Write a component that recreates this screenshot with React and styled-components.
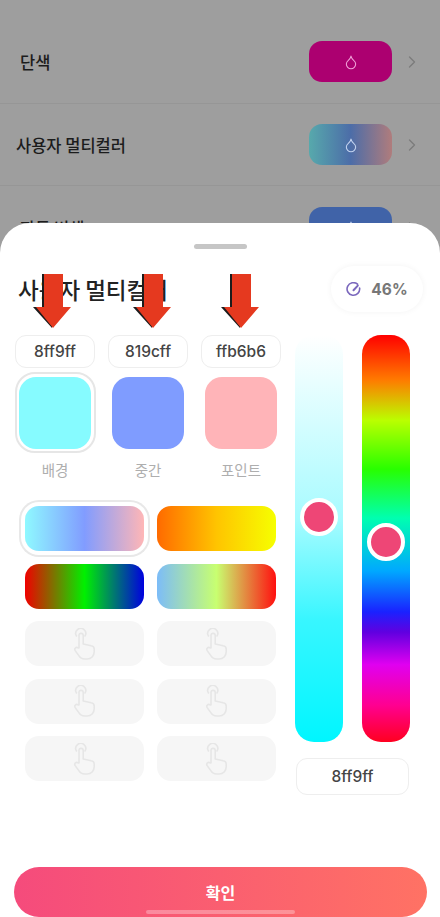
import React from "react";
import styled, { createGlobalStyle } from "styled-components";
import { ChevronRight, Droplet } from "lucide-react";

const GlobalStyle = createGlobalStyle`
  html, body {
    margin: 0;
    padding: 0;
    background: #9e9e9e;
  }
  * {
    box-sizing: border-box;
  }
`;

const Page = styled.div`
  width: 440px;
  height: 917px;
  overflow: hidden;
  background: #9e9e9e;
  font-family: "Noto Sans CJK KR", "Noto Sans", sans-serif;
`;

const Backdrop = styled.div`
  height: 223px;
  overflow: hidden;
`;

const Row = styled.div`
  display: flex;
  align-items: center;
  height: ${(props) => props.$height}px;
  padding: ${(props) => props.$top || 0}px 18px 0 ${(props) => props.$left}px;
  border-bottom: 1px solid #969696;
  color: #1c1c1c;
`;

const RowLabel = styled.span`
  font-size: 16.5px;
  font-weight: 500;
`;

const ColorChip = styled.div`
  display: flex;
  align-items: center;
  justify-content: center;
  width: 83px;
  height: 41px;
  margin-left: auto;
  margin-right: 10px;
  border-radius: 13px;
  background: ${(props) => props.$fill};
  color: ${(props) => props.$tint};
`;

const Sheet = styled.div`
  display: flex;
  flex-direction: column;
  height: 694px;
  border-radius: 30px 30px 0 0;
  background: #fff;
`;

const Grabber = styled.div`
  width: 53px;
  height: 5px;
  margin: 21px auto 0;
  border-radius: 3px;
  background: #c6c6c6;
`;

const Header = styled.div`
  display: flex;
  align-items: center;
  justify-content: space-between;
  height: 46px;
  margin-top: 17px;
  padding: 0 17px 0 18px;
`;

const Title = styled.h1`
  margin: 0;
  font-size: 22.5px;
  font-weight: 500;
  color: #222;
`;

const Pill = styled.div`
  display: flex;
  align-items: center;
  justify-content: center;
  gap: 10px;
  width: 92px;
  height: 46px;
  border-radius: 23px;
  background: #fff;
  box-shadow: 0 0 6px rgba(0, 0, 0, 0.05);
  color: #777;
  font-family: "Inter", sans-serif;
  font-size: 15.5px;
  font-weight: 700;
`;

const Body = styled.div`
  display: flex;
  margin-top: 23px;
`;

const LeftColumn = styled.div`
  width: 281px;
  padding-left: 15px;
`;

const SwatchGrid = styled.div`
  display: grid;
  grid-template-columns: repeat(3, 80px);
  column-gap: 13px;
  justify-items: center;
`;

const HexField = styled.div`
  position: relative;
  display: flex;
  align-items: center;
  justify-content: center;
  width: ${(props) => props.$width || 80}px;
  height: ${(props) => props.$height || 33}px;
  border: 1px solid #eee;
  border-radius: 11px;
  background: #fff;
  color: #444;
  font-family: "Inter", sans-serif;
  font-size: 15.5px;
  font-weight: 500;
`;

const ArrowMark = styled.svg`
  position: absolute;
  left: ${(props) => props.$left}px;
  top: -63px;
  width: 40px;
  height: 56px;
`;

const SwatchFrame = styled.div`
  display: flex;
  align-items: center;
  justify-content: center;
  width: 81px;
  height: 81px;
  margin-top: 4px;
  border: 2px solid ${(props) => (props.$selected ? "#e6e6e6" : "transparent")};
  border-radius: 20px;
`;

const Swatch = styled.div`
  width: 72px;
  height: 72px;
  border-radius: 17px;
  background: ${(props) => props.$fill};
`;

const SwatchLabel = styled.div`
  margin-top: 6px;
  color: #aeaeae;
  font-size: 14.5px;
  line-height: 22px;
`;

const PresetGrid = styled.div`
  display: grid;
  grid-template-columns: repeat(2, 119px);
  grid-auto-rows: 45px;
  gap: 12.5px 13px;
  margin: 25px 0 0 10px;
`;

const Preset = styled.div`
  display: flex;
  align-items: center;
  justify-content: center;
  border-radius: 14px;
  background: ${(props) => props.$fill || "#f6f6f6"};
  box-shadow: ${(props) =>
    props.$selected ? "0 0 0 4px #fff, 0 0 0 6px #e8e8e8" : "none"};
`;

const HandIcon = styled.svg`
  width: 24px;
  height: 32px;
  fill: none;
  stroke: #e6e6e6;
  stroke-width: 1.6;
  stroke-linecap: round;
  stroke-linejoin: round;
`;

const RightColumn = styled.div`
  display: flex;
  flex-direction: column;
  width: 115px;
  margin-left: 14px;
`;

const SliderPair = styled.div`
  display: flex;
  gap: 19px;
`;

const Slider = styled.div`
  position: relative;
  width: 48px;
  height: 407px;
  border-radius: 19px;
  background: ${(props) => props.$fill};
`;

const Thumb = styled.div`
  position: absolute;
  left: 5px;
  top: ${(props) => props.$top}px;
  width: 38px;
  height: 38px;
  border: 4px solid #fff;
  border-radius: 50%;
  background: #ee4676;
`;

const ValueSlot = styled.div`
  margin: 16px 0 0 1px;
`;

const Footer = styled.div`
  position: relative;
  display: flex;
  align-items: center;
  justify-content: center;
  height: 50px;
  margin: auto 13px 0 14px;
  border-radius: 25px;
  background: linear-gradient(90deg, #f54b7c, #ff7264);
  color: #fff;
  font-size: 16px;
  font-weight: 700;
`;

const HomeBar = styled.div`
  position: absolute;
  left: 132px;
  bottom: 3px;
  width: 149px;
  height: 4px;
  border-radius: 2px;
  background: rgba(255, 255, 255, 0.3);
`;

const hues =
  "linear-gradient(180deg, #ff0000 0%, #ff7a00 11%, #baff00 21%, #28ff00 33%, #00ffb0 45%, #00a8ff 58%, #1a22ff 68%, #6000e0 73%, #e000f0 81%, #ff0090 91%, #ff0020 100%)";

const swatches = [
  { hex: "8ff9ff", label: "배경", fill: "#86fbff", selected: true, arrow: 17 },
  { hex: "819cff", label: "중간", fill: "#7f9cff", arrow: 24 },
  { hex: "ffb6b6", label: "포인트", fill: "#ffb4b8", arrow: 19 },
];

const presets = [
  { fill: "linear-gradient(90deg, #8ff9ff, #819cff 50%, #ffb6b6)", selected: true },
  { fill: "linear-gradient(90deg, #ff6a00, #ffc400 50%, #f6ff00)" },
  { fill: "linear-gradient(90deg, #f00000, #00f000 50%, #0000e0)" },
  { fill: "linear-gradient(90deg, #7cbcf8, #c8ff70 50%, #ff1010)" },
  {},
  {},
  {},
  {},
  {},
  {},
];

function Arrow({ left }) {
  return (
    <ArrowMark $left={left} viewBox="0 0 40 56">
      <path fill="#1c1c1c" d="M9 1h8v33h3l-1 21L0 34h9z" />
      <path fill="#e5391f" d="M11 1h19v33h8L20 55 3 34h8z" />
    </ArrowMark>
  );
}

function Hand() {
  return (
    <HandIcon viewBox="0 0 24 32">
      <path d="M3.500 8a5 5 0 1 1 8.500 0" />
      <path d="M6 20V7.500a2.100 2.100 0 0 1 4.200 0V16l8 1.800a3.400 3.400 0 0 1 3 3.400V24a7 7 0 0 1-7 7h-2.400a7 7 0 0 1-6-3.400L2 22.400a2 2 0 0 1 3-2.500z" />
    </HandIcon>
  );
}

export default function App() {
  return (
    <Page>
      <GlobalStyle />
      <Backdrop>
        <Row $height={104} $top={20} $left={20}>
          <RowLabel>단색</RowLabel>
          <ColorChip $fill="#ac0070" $tint="#f0a0d8">
            <Droplet size={16} strokeWidth={1.6} />
          </ColorChip>
          <ChevronRight size={20} color="#7c7c7c" strokeWidth={1.6} />
        </Row>
        <Row $height={82} $left={16}>
          <RowLabel>사용자 멀티컬러</RowLabel>
          <ColorChip
            $fill="linear-gradient(90deg, #57a9ac, #4c6da8 50%, #b07c7c)"
            $tint="#c4d4f0"
          >
            <Droplet size={16} strokeWidth={1.6} />
          </ColorChip>
          <ChevronRight size={20} color="#7c7c7c" strokeWidth={1.6} />
        </Row>
        <Row $height={84} $left={20}>
          <RowLabel>자동 변색 1</RowLabel>
          <ColorChip $fill="#4063a8" $tint="#c4d4f0">
            <Droplet size={16} strokeWidth={1.6} />
          </ColorChip>
          <ChevronRight size={20} color="#7c7c7c" strokeWidth={1.6} />
        </Row>
      </Backdrop>
      <Sheet>
        <Grabber />
        <Header>
          <Title>사용자 멀티컬러</Title>
          <Pill>
            <svg width="15" height="15" viewBox="0 0 15 15" fill="none">
              <path
                d="M11.500 2.200A6.300 6.300 0 1 0 13.600 6"
                stroke="#7b68bd"
                strokeWidth="1.600"
                strokeLinecap="round"
              />
              <path
                d="M7.500 8.200 11.800 3.600"
                stroke="#7b68bd"
                strokeWidth="2"
                strokeLinecap="round"
              />
            </svg>
            46%
          </Pill>
        </Header>
        <Body>
          <LeftColumn>
            <SwatchGrid>
              {swatches.map((item) => (
                <HexField key={item.hex}>
                  <Arrow left={item.arrow} />
                  {item.hex}
                </HexField>
              ))}
              {swatches.map((item) => (
                <SwatchFrame key={item.hex} $selected={item.selected}>
                  <Swatch $fill={item.fill} />
                </SwatchFrame>
              ))}
              {swatches.map((item) => (
                <SwatchLabel key={item.hex}>{item.label}</SwatchLabel>
              ))}
            </SwatchGrid>
            <PresetGrid>
              {presets.map((item, index) => (
                <Preset key={index} $fill={item.fill} $selected={item.selected}>
                  {!item.fill && <Hand />}
                </Preset>
              ))}
            </PresetGrid>
          </LeftColumn>
          <RightColumn>
            <SliderPair>
              <Slider $fill="linear-gradient(180deg, #fff 0%, #a8fbff 45%, #38f6ff 70%, #00f6ff 100%)">
                <Thumb $top={163} />
              </Slider>
              <Slider $fill={hues}>
                <Thumb $top={188} />
              </Slider>
            </SliderPair>
            <ValueSlot>
              <HexField $width={113} $height={37}>
                8ff9ff
              </HexField>
            </ValueSlot>
          </RightColumn>
        </Body>
        <Footer>
          확인
          <HomeBar />
        </Footer>
      </Sheet>
    </Page>
  );
}
